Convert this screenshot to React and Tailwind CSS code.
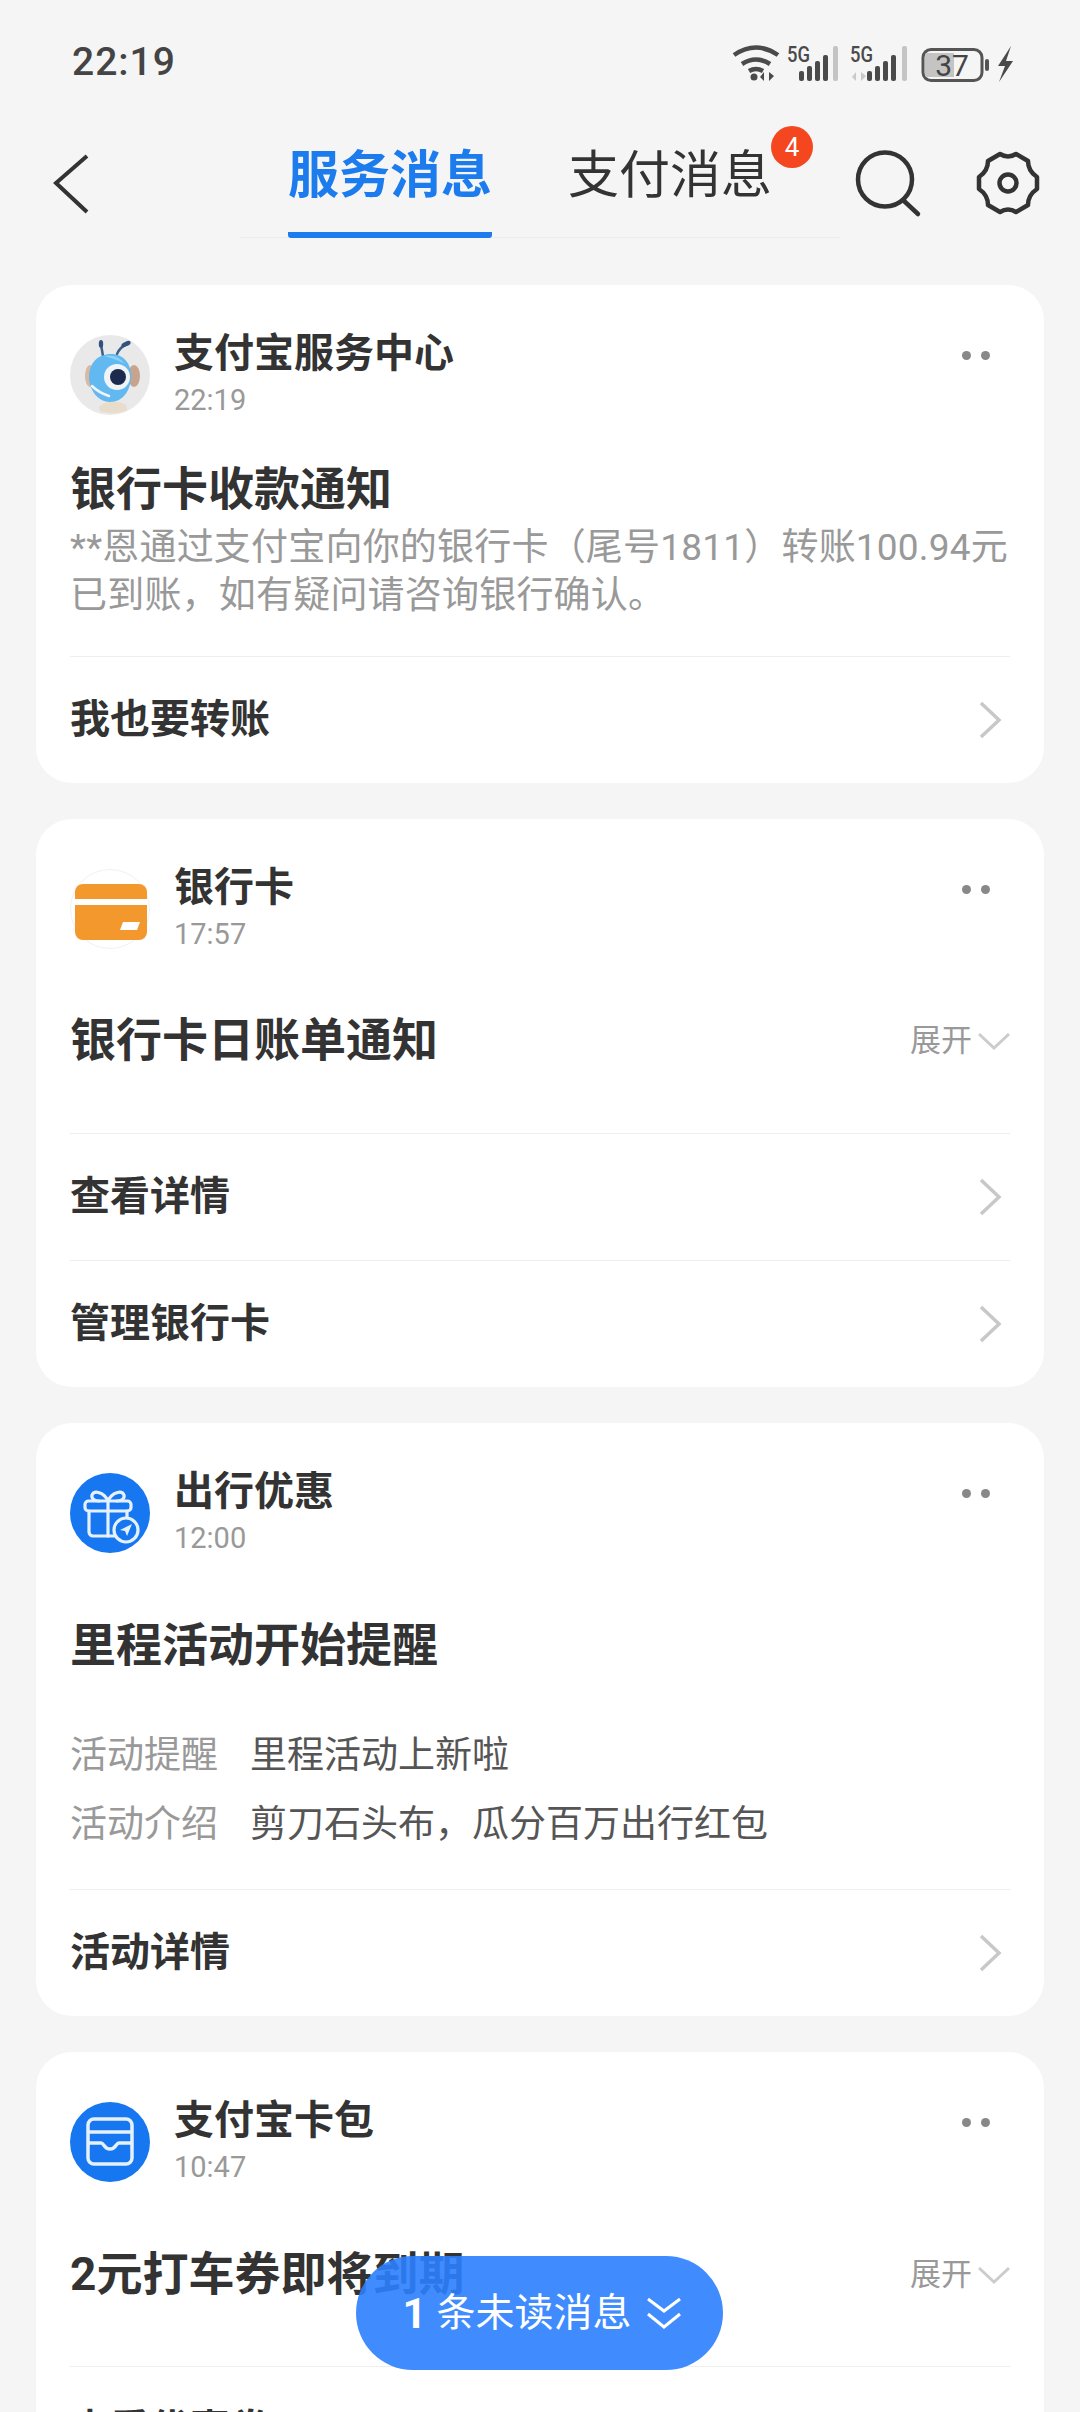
import React from "react";

function Dots() {
  return (
    <div className="absolute right-[54px] top-[66px] flex gap-[10px]">
      <span className="w-[9px] h-[9px] rounded-full bg-[#888]" />
      <span className="w-[9px] h-[9px] rounded-full bg-[#888]" />
    </div>
  );
}

function ChevronRight() {
  return (
    <svg width="24" height="38" viewBox="0 0 24 38" fill="none" stroke="#c8c8c8" strokeWidth="3.5" className="mr-[8px]">
      <path d="M3 2l18 17L3 36" />
    </svg>
  );
}

function Expand() {
  return (
    <div className="flex items-center mt-[2px] text-[31px] leading-[40px] text-[#999]">
      展开
      <svg width="32" height="20" viewBox="0 0 32 20" fill="none" stroke="#ccc" strokeWidth="3" className="ml-[6px] mt-[2px]">
        <path d="M1 2l15 14L31 2" />
      </svg>
    </div>
  );
}

function ActionRow({ label }) {
  return (
    <div className="h-[127px] border-t border-[#eee] flex items-center justify-between">
      <span className="text-[40px] font-semibold text-[#333]">{label}</span>
      <ChevronRight />
    </div>
  );
}

function Card({ icon, name, time, children }) {
  return (
    <section className="relative bg-white rounded-[36px] px-[34px] pt-[46px]">
      <Dots />
      <div className="flex items-center gap-[24px] h-[88px]">
        <div className="w-[80px] h-[80px] shrink-0">{icon}</div>
        <div className="flex flex-col">
          <span className="text-[40px] leading-[48px] font-semibold text-[#333]">{name}</span>
          <span className="mt-[2px] text-[29px] leading-[40px] text-[#999]">{time}</span>
        </div>
      </div>
      {children}
    </section>
  );
}

function AntIcon() {
  return (
    <svg viewBox="0 0 80 80" className="w-full h-full">
      <circle cx="40" cy="40" r="40" fill="#e9e9e9" />
      <path d="M29 72c6-6 18-7 27-2l1 5c-8 4-20 4-27 1z" fill="#e8dccb" />
      <path d="M33 21q-1-6-2-11M47 19q3-7 10-10" stroke="#3d5f8a" strokeWidth="2.5" fill="none" strokeLinecap="round" />
      <ellipse cx="31" cy="9" rx="2.2" ry="4" fill="#30527d" />
      <ellipse cx="56" cy="9" rx="5" ry="2.3" fill="#30527d" transform="rotate(-25 56 9)" />
      <ellipse cx="20" cy="41" rx="5" ry="11" fill="#d9b9a2" />
      <ellipse cx="64" cy="41" rx="6" ry="11" fill="#c7a48e" />
      <path d="M19 42c0-14 9-23 22-23 12 0 20 9 20 22 0 14-8 26-21 26-12 0-21-12-21-25z" fill="#62b8f0" />
      <path d="M34 21c8-2 16 1 21 8-7-4-14-6-21-8z" fill="#8ad2f6" />
      <circle cx="47" cy="42" r="13" fill="#f0f4f6" />
      <circle cx="48" cy="42" r="8" fill="#1c2a4e" />
      <path d="M22 51c5 5 11 8 17 10" stroke="#f0f4f6" strokeWidth="2.5" fill="none" strokeLinecap="round" />
    </svg>
  );
}

function CardIcon() {
  return (
    <svg viewBox="0 0 80 80" className="w-full h-full">
      <circle cx="40" cy="40" r="39.5" fill="#fff" stroke="#f1f1f1" />
      <path d="M5 23a8 8 0 0 1 8-8h56a8 8 0 0 1 8 8v7H5z" fill="#f3982d" />
      <path d="M5 36h72v27a8 8 0 0 1-8 8H13a8 8 0 0 1-8-8z" fill="#f3982d" />
      <path d="M53 53h17l-3 8H50z" fill="#fff" />
    </svg>
  );
}

function GiftIcon() {
  return (
    <svg viewBox="0 0 80 80" className="w-full h-full">
      <circle cx="40" cy="40" r="40" fill="#1677f0" />
      <g fill="none" stroke="#e6f1ff" strokeWidth="3.2" strokeLinejoin="round" strokeLinecap="round">
        <rect x="15" y="28" width="46" height="10" rx="3.5" />
        <path d="M19 38v21a4 4 0 0 0 4 4h21M57 38v6" />
        <path d="M38 28v35" />
        <path d="M38 28c-4-9-14-11-16-6-1 4 3 6 7 6M38 28c4-9 14-11 16-6 1 4-3 6-7 6" />
        <circle cx="56" cy="57" r="12" fill="#1677f0" />
      </g>
      <path d="M50 57l12-6-5 12-2-5z" fill="#e6f1ff" />
    </svg>
  );
}

function WalletIcon() {
  return (
    <svg viewBox="0 0 80 80" className="w-full h-full">
      <circle cx="40" cy="40" r="40" fill="#1677f0" />
      <g fill="none" stroke="#e6f1ff" strokeWidth="3.5" strokeLinejoin="round">
        <rect x="18" y="17" width="44" height="45" rx="6" />
        <path d="M18 30h44" />
        <path d="M18 41h13c3 0 3 6 9 6s6-6 9-6h13" />
      </g>
    </svg>
  );
}

function StatusIcons() {
  return (
    <svg width="285" height="40" viewBox="0 0 285 40" className="block">
      <g fill="none" stroke="#4a4a4a" strokeWidth="4.5">
        <path d="M2 13q22-15 44 0" />
        <path d="M10 22q14-9 28 0" />
        <path d="M17 29q7-4 14 0" />
      </g>
      <circle cx="22" cy="35" r="3.5" fill="#4a4a4a" />
      <path d="M32 39v-9l-4 5zM37 30v9l5-5z" fill="#4a4a4a" />
      <text x="55" y="20" fontSize="22" textLength="23" lengthAdjust="spacingAndGlyphs" fontWeight="500" fill="#4a4a4a" fontFamily="Roboto">5G</text>
      <g fill="#4a4a4a">
        <rect x="67" y="29" width="5" height="10" rx="2" />
        <rect x="75" y="24" width="5" height="15" rx="2" />
        <rect x="83" y="19" width="5" height="20" rx="2" />
        <rect x="91" y="13" width="5" height="26" rx="2" />
      </g>
      <rect x="101" y="4" width="5" height="35" rx="2" fill="#c4c4c4" />
      <text x="118" y="20" fontSize="22" textLength="23" lengthAdjust="spacingAndGlyphs" fontWeight="500" fill="#4a4a4a" fontFamily="Roboto">5G</text>
      <path d="M124 39v-9l-4 5zM129 30v9l5-5z" fill="#c9c9c9" />
      <g fill="#4a4a4a">
        <rect x="135" y="29" width="5" height="10" rx="2" />
        <rect x="143" y="24" width="5" height="15" rx="2" />
        <rect x="151" y="19" width="5" height="20" rx="2" />
        <rect x="159" y="13" width="5" height="26" rx="2" />
      </g>
      <rect x="170" y="4" width="5" height="35" rx="2" fill="#c4c4c4" />
      <rect x="191" y="7.5" width="59" height="31" rx="8" fill="none" stroke="#555" strokeWidth="3" />
      <path d="M195 11h27v24h-27a2 2 0 0 1-2-2V13a2 2 0 0 1 2-2z" fill="#c4c4c4" />
      <text x="220" y="34" fontSize="30" textAnchor="middle" fill="#444" fontFamily="Roboto">37</text>
      <rect x="253" y="17" width="4" height="12" rx="2" fill="#555" />
      <path d="M279 4l-13 20h7l-6 16 14-21h-7z" fill="#4a4a4a" />
    </svg>
  );
}

export default function App() {
  return (
    <div className="relative w-[1080px] h-[2412px] overflow-hidden bg-[#f5f5f5] font-['Roboto','Noto_Sans_CJK_SC',sans-serif]">
      {/* Status bar */}
      <div className="h-[100px] pl-[72px] pr-[63px] pt-[38px] flex justify-between items-start">
        <span className="text-[39px] leading-[48px] font-medium text-[#444] tracking-[1px]">22:19</span>
        <div className="pt-[4px]"><StatusIcons /></div>
      </div>

      {/* Nav */}
      <header className="relative h-[138px] flex">
        <svg width="36" height="60" viewBox="0 0 36 60" fill="none" stroke="#333" strokeWidth="4" className="absolute left-[53px] top-[54px]">
          <path d="M34 2L3 29l31 29" />
        </svg>
        <div className="ml-[240px] w-[600px] h-[138px] border-b border-[#ececec] flex items-start">
          <div className="ml-[48px] mr-[76px] h-[138px] w-[204px] border-b-[6px] border-[#1c7cee] rounded-b-[3px]">
            <span className="block text-[51px] leading-[72px] mt-[40px] font-bold text-[#1c7cee] whitespace-nowrap">服务消息</span>
          </div>
          <div className="relative">
            <span className="block text-[51px] leading-[72px] mt-[40px] text-[#333] whitespace-nowrap">支付消息</span>
            <span className="absolute left-[203px] top-[26px] w-[42px] h-[42px] rounded-full bg-[#f4471f] text-white text-[26px] flex items-center justify-center">4</span>
          </div>
        </div>
        <svg width="70" height="70" viewBox="0 0 70 70" fill="none" stroke="#333" strokeWidth="4.5" className="absolute left-[854px] top-[48px]">
          <circle cx="31" cy="31.5" r="27" />
          <path d="M49 52l15 14" strokeLinecap="round" />
        </svg>
        <svg width="64" height="64" viewBox="0 0 64 64" fill="none" stroke="#333" strokeWidth="4.5" strokeLinejoin="round" className="absolute left-[976px] top-[51px]">
          <path d="M24 3Q32 8 40 3L52 10Q52 20 61 26L61 38Q52 44 52 54L40 61Q32 56 24 61L12 54Q12 44 3 38L3 26Q12 20 12 10Z" />
          <circle cx="32" cy="32" r="8.5" />
        </svg>
      </header>

      <main className="px-[36px] pt-[47px] flex flex-col gap-[36px]">
        <Card icon={<AntIcon />} name="支付宝服务中心" time="22:19">
          <h2 className="mt-[38px] text-[46px] leading-[64px] font-bold text-[#333]">银行卡收款通知</h2>
          <p className="mt-[3px] text-[37px] leading-[48px] text-[#999] whitespace-nowrap tracking-[0.2px] mb-[36px]">
            **恩通过支付宝向你的银行卡（尾号1811）转账100.94元
            <br />
            已到账，如有疑问请咨询银行确认。
          </p>
          <ActionRow label="我也要转账" />
        </Card>

        <Card icon={<CardIcon />} name="银行卡" time="17:57">
          <div className="mt-[55px] h-[64px] flex items-center justify-between">
            <h2 className="text-[46px] leading-[64px] font-bold text-[#333]">银行卡日账单通知</h2>
            <Expand />
          </div>
          <div className="h-[61px]" />
          <ActionRow label="查看详情" />
          <ActionRow label="管理银行卡" />
        </Card>

        <Card icon={<GiftIcon />} name="出行优惠" time="12:00">
          <h2 className="mt-[56px] text-[46px] leading-[64px] font-bold text-[#333]">里程活动开始提醒</h2>
          <div className="mt-[55px] flex flex-col gap-[21px] mb-[40px] text-[37px] leading-[48px]">
            <div className="flex gap-[32px]">
              <span className="text-[#999]">活动提醒</span>
              <span className="text-[#555]">里程活动上新啦</span>
            </div>
            <div className="flex gap-[32px]">
              <span className="text-[#999]">活动介绍</span>
              <span className="text-[#555]">剪刀石头布，瓜分百万出行红包</span>
            </div>
          </div>
          <ActionRow label="活动详情" />
        </Card>

        <Card icon={<WalletIcon />} name="支付宝卡包" time="10:47">
          <div className="mt-[56px] h-[64px] flex items-center justify-between">
            <h2 className="text-[46px] leading-[64px] font-bold text-[#333]">2元打车券即将到期</h2>
            <Expand />
          </div>
          <div className="h-[60px]" />
          <ActionRow label="查看优惠券" />
        </Card>
      </main>

      {/* Unread pill */}
      <div className="absolute left-[356px] top-[2256px] w-[367px] h-[114px] pl-[5px] rounded-full bg-[#2b80ff]/90 flex items-center justify-center text-white">
        <span className="text-[42px] font-bold mr-[10px]">1</span>
        <span className="text-[39px]">条未读消息</span>
        <svg width="36" height="34" viewBox="0 0 36 34" fill="none" stroke="#fff" strokeWidth="3" className="ml-[14px]">
          <path d="M2 3l16 12L34 3M2 18l16 13 16-13" />
        </svg>
      </div>
    </div>
  );
}
